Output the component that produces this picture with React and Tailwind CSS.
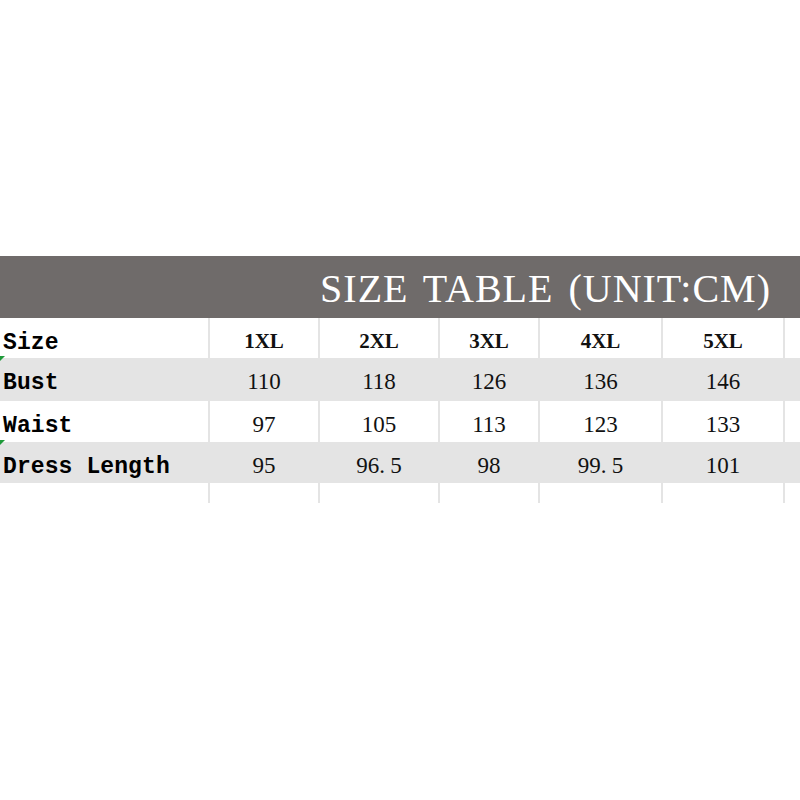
import React from "react";

const cols = "grid grid-cols-[210px_110px_120px_100px_123px_122px_15px]";

function Tri() {
  return (
    <svg className="absolute left-0 top-[-2px]" width="5" height="5" viewBox="0 0 6 6">
      <polygon points="0,0 6,0 0,6" fill="#1f9a3a" />
    </svg>
  );
}

function Num({ v }) {
  if (v.includes(".")) {
    const [a, b] = v.split(".");
    return (
      <span>
        {a}
        <span className="inline-block w-[11px] text-left">.</span>
        {b}
      </span>
    );
  }
  return <span>{v}</span>;
}

function Row({ label, values, gray, head, h, tri }) {
  return (
    <div className={`${cols} relative ${h} ${gray ? "bg-[#e4e4e4]" : "bg-white"}`}>
      {tri && <Tri />}
      <div className="border-r-2 border-[#e4e4e4] flex items-center pl-[3px] pt-[8px] font-['Liberation_Mono',monospace] font-bold text-[23px] text-black tracking-[0.1px] whitespace-nowrap">
        {label}
      </div>
      {values.map((v, i) => (
        <div
          key={i}
          className={`border-r-2 border-[#e4e4e4] flex items-center justify-center pt-[5px] font-['Liberation_Serif',serif] text-[#111] ${
            head ? "font-bold text-[21px]" : "text-[23px]"
          }`}
        >
          <Num v={v} />
        </div>
      ))}
      <div />
    </div>
  );
}

export default function App() {
  return (
    <div className="w-[800px] h-[800px] bg-white flex flex-col">
      <div className="h-[256px]" />
      <div className="h-[62px] bg-[#6f6b6a] flex items-center justify-end pr-[29px] pt-[4px]">
        <span className="font-['Liberation_Serif',serif] text-white text-[40px] tracking-[1px] [word-spacing:4px] leading-none">
          SIZE TABLE (UNIT:CM)
        </span>
      </div>
      <Row label="Size" values={["1XL", "2XL", "3XL", "4XL", "5XL"]} head h="h-[40px]" />
      <Row label="Bust" values={["110", "118", "126", "136", "146"]} gray h="h-[43px]" tri />
      <Row label="Waist" values={["97", "105", "113", "123", "133"]} h="h-[41px]" />
      <Row label="Dress Length" values={["95", "96.5", "98", "99.5", "101"]} gray h="h-[41px]" tri />
      <Row label="" values={["", "", "", "", ""]} h="h-[20px]" />
    </div>
  );
}
